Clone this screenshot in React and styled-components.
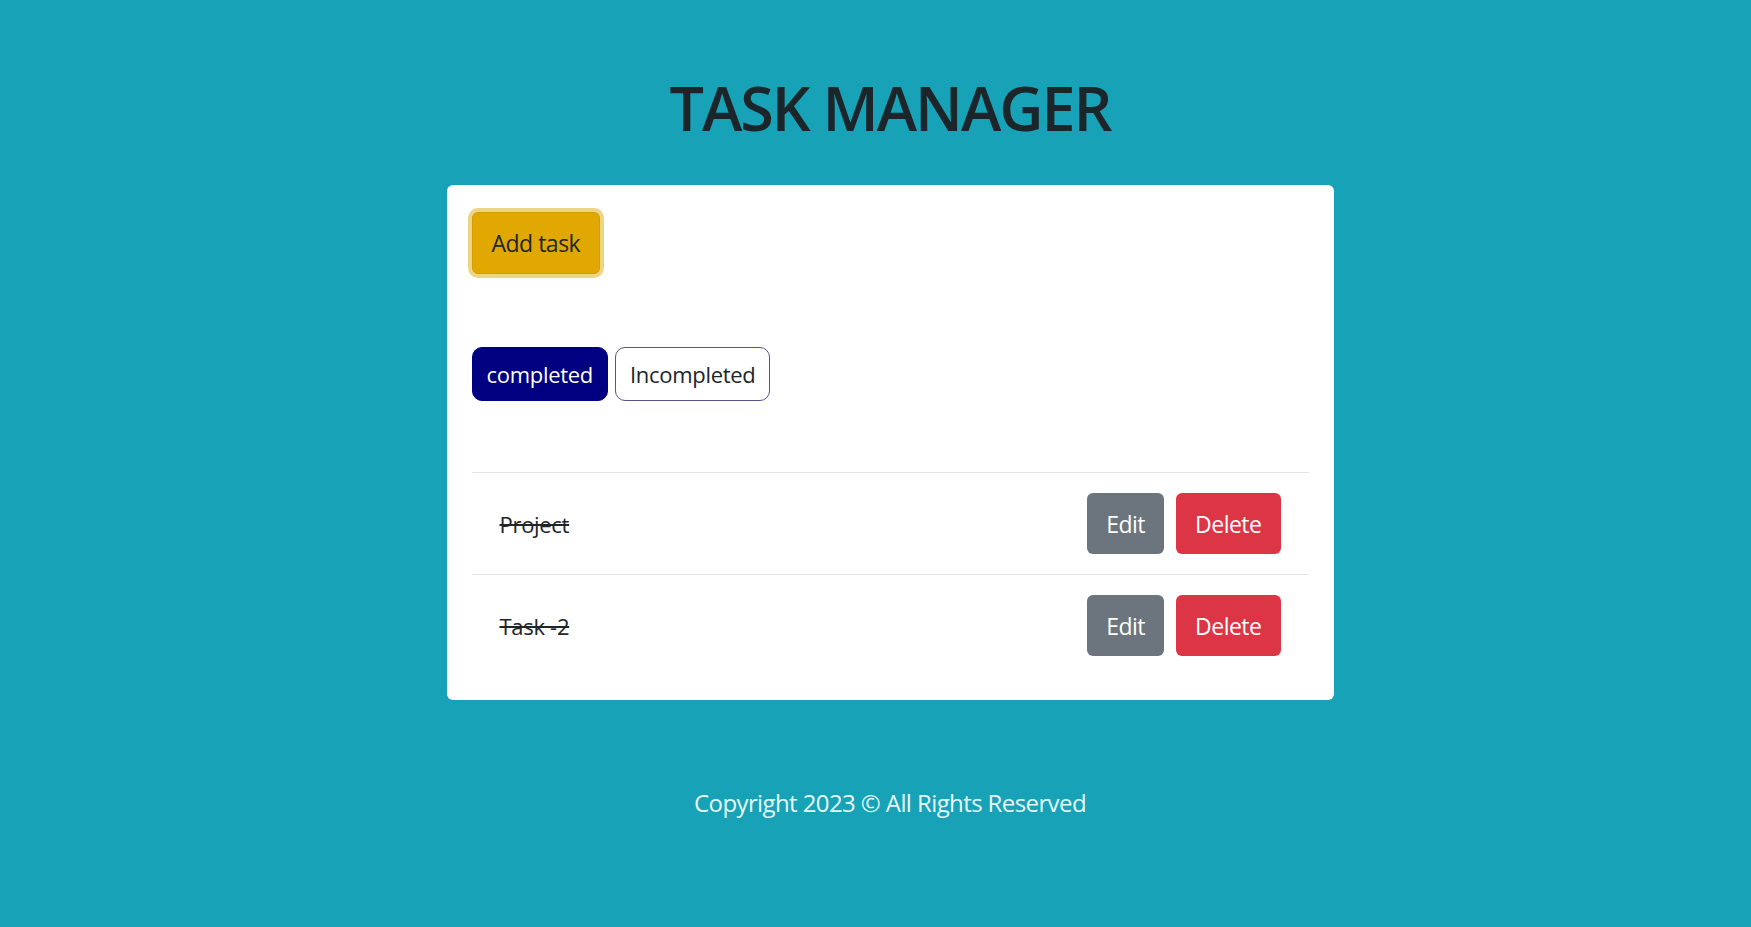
import React, { useState } from 'react';
import styled, { createGlobalStyle } from 'styled-components';

const GlobalStyle = createGlobalStyle`
  html, body {
    margin: 0;
    padding: 0;
    background-color: #17a2b8;
  }
  body {
    font-family: "Open Sans", "Noto Sans", sans-serif;
    color: #212529;
  }
`;

const Page = styled.div`
  min-height: 927px;
  display: flex;
  flex-direction: column;
  align-items: center;
  padding-left: 29px;
  box-sizing: border-box;
`;

const Title = styled.h1`
  margin: 69px 0 38px;
  font-size: 61px;
  line-height: 78px;
  font-weight: 600;
  letter-spacing: -2px;
  color: #1c2529;
`;

const Card = styled.div`
  width: 887px;
  box-sizing: border-box;
  background: #fff;
  border-radius: 6px;
  padding: 27px 25px 24px;
`;

const AddButton = styled.button`
  height: 62px;
  padding: 0 19px;
  font-family: inherit;
  font-size: 23px;
  letter-spacing: -0.5px;
  color: #212529;
  background-color: #e0a800;
  border: 1px solid #d39e00;
  border-radius: 6px;
  box-shadow: 0 0 0 4px rgba(222, 170, 12, 0.5);
  cursor: pointer;
`;

const FilterRow = styled.div`
  display: flex;
  gap: 7px;
  margin: 73px 0 71px;
`;

const FilterButton = styled.button`
  height: 54px;
  padding: 0 14px;
  font-family: inherit;
  font-size: 22px;
  letter-spacing: -0.3px;
  border-radius: 10px;
  cursor: pointer;
  color: ${(p) => (p.active ? '#fff' : '#212529')};
  background-color: ${(p) => (p.active ? '#000080' : '#fff')};
  border: 1px solid ${(p) => (p.active ? '#000080' : '#55558a')};
`;

const List = styled.ul`
  list-style: none;
  margin: 0;
  padding: 0;
`;

const Item = styled.li`
  display: flex;
  align-items: center;
  justify-content: space-between;
  padding: 20px 28px;
  border-top: 1px solid #e2e4e6;
`;

const TaskName = styled.span`
  font-size: 22px;
  letter-spacing: -0.3px;
  text-decoration: ${(p) => (p.done ? 'line-through' : 'none')};
  color: #212529;
`;

const Actions = styled.div`
  display: flex;
  gap: 12px;
`;

const ActionButton = styled.button`
  height: 61px;
  padding: 0 19px;
  font-family: inherit;
  font-size: 23px;
  letter-spacing: -0.5px;
  color: #fff;
  border: none;
  border-radius: 6px;
  cursor: pointer;
  background-color: ${(p) => (p.variant === 'danger' ? '#dc3545' : '#6c757d')};
`;

const Footer = styled.p`
  margin: 83px 0 0;
  font-size: 24px;
  line-height: 39px;
  letter-spacing: -0.6px;
  color: #e6f9fa;
`;

const tasks = [
  { id: 1, name: 'Project', done: true },
  { id: 2, name: 'Task -2', done: true },
];

const App = () => {
  const [filter, setFilter] = useState('completed'); // which list is shown

  return (
    <>
      <GlobalStyle />
      <Page>
        <Title>TASK MANAGER</Title>
        <Card>
          <AddButton>Add task</AddButton>
          <FilterRow>
            <FilterButton active={filter === 'completed'} onClick={() => setFilter('completed')}>
              completed
            </FilterButton>
            <FilterButton active={filter === 'incompleted'} onClick={() => setFilter('incompleted')}>
              Incompleted
            </FilterButton>
          </FilterRow>
          <List>
            {tasks.map((t) => (
              <Item key={t.id}>
                <TaskName done={t.done}>{t.name}</TaskName>
                <Actions>
                  <ActionButton>Edit</ActionButton>
                  <ActionButton variant='danger'>Delete</ActionButton>
                </Actions>
              </Item>
            ))}
          </List>
        </Card>
        <Footer>Copyright 2023 © All Rights Reserved</Footer>
      </Page>
    </>
  );
};

export default App;
